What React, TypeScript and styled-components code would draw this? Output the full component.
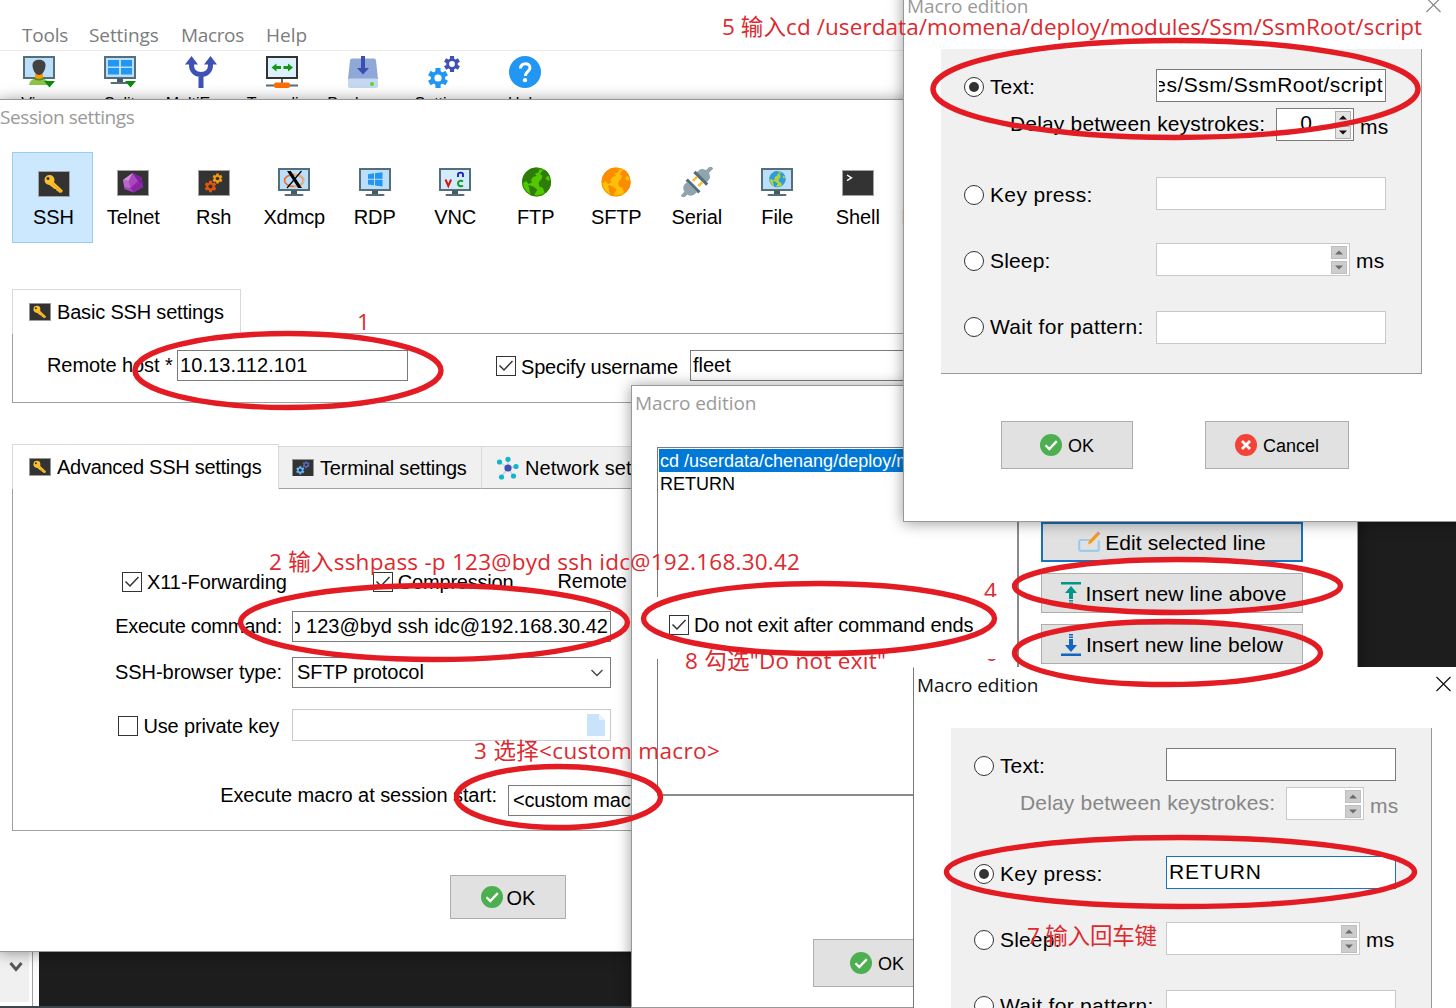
import React from "react";
import styled, { createGlobalStyle, css } from "styled-components";

const Global = createGlobalStyle`
  * { box-sizing: border-box; }
  body { margin: 0; background: #fff; overflow: hidden; }
`;

const ui = `"Open Sans", "Noto Sans", "Noto Sans CJK SC", sans-serif`;
const arial = `"Liberation Sans", Arial, sans-serif`;
const red = "#e31b23";

/* ---------- desktop ---------- */

const Desktop = styled.main`
  position: relative;
  width: 1456px;
  height: 1008px;
  overflow: hidden;
  background: #fff;
  color: #000;
  font-family: ${arial};
  font-size: 20px;
  line-height: 24px;
  white-space: nowrap;
`;

const Terminal = styled.div`
  position: absolute;
  left: 0;
  top: 100px;
  width: 1456px;
  height: 908px;
  display: flex;
  background: #1d1d1d;
  border-bottom: 2px solid #3b474b;
`;

const SideRail = styled.div`
  display: flex;
  align-items: flex-end;
  width: 33px;
  padding: 0 3px 4px 0;
  background: #fff;
  border-right: 1px solid #a0a0a0;
`;

const ScrollTrack = styled.div`
  width: 29px;
  height: 56px;
  padding: 8px 0 0 9px;
  background: #f0f0f0;
`;

const RailGap = styled.div`
  width: 6px;
  background: #fcfcfc;
`;

const MainApp = styled.header`
  height: 100px;
  overflow: hidden;
  background: #fff;
`;

const MenuBar = styled.nav`
  display: flex;
  height: 51px;
  padding: 23px 0 0 22px;
  border-bottom: 1px solid #ebebeb;
  color: #7c7c7c;
  font: 19px/24px ${ui};
`;

const MenuItem = styled.span<{ $w: number; $ls: number }>`
  width: ${(p) => p.$w}px;
  letter-spacing: ${(p) => p.$ls}px;
`;

const ToolBar = styled.div`
  display: flex;
  padding-top: 5px;
  margin-left: -2px;
`;

const ToolItem = styled.div`
  display: flex;
  flex-direction: column;
  align-items: center;
  gap: 6px;
  width: 81px;
  font-size: 16px;
  line-height: 20px;
  svg { flex: none; }
`;

/* ---------- windows ---------- */

const Window = styled.section<{ $x: number; $y: number; $w: number; $h: number; $flat?: boolean }>`
  position: absolute;
  left: ${(p) => p.$x}px;
  top: ${(p) => p.$y}px;
  width: ${(p) => p.$w}px;
  height: ${(p) => p.$h}px;
  background: #fff;
  border: 1px solid #989898;
  ${(p) =>
    p.$flat
      ? css`border-color: #fff #fff #fff #777;`
      : css`box-shadow: 0 1px 14px rgba(0, 0, 0, 0.4);`}
`;

const TitleBar = styled.div<{ $active?: boolean; $flush?: boolean }>`
  display: flex;
  flex: none;
  align-items: center;
  height: 34px;
  padding-left: ${(p) => (p.$flush ? 0 : 3)}px;
  color: ${(p) => (p.$active ? "#111" : "#9a9a9a")};
  font: 19px/24px ${ui};
  letter-spacing: ${(p) => (p.$flush ? -0.42 : -0.1)}px;
`;

const Text = styled.span<{ $ls?: number; $dy?: number; $dim?: boolean; $ml?: number; $w?: number }>`
  ${(p) => p.$w && css`width: ${p.$w}px;`}
  letter-spacing: ${(p) => p.$ls ?? 0}px;
  margin-top: ${(p) => (p.$dy ?? 0) * 2}px;
  margin-left: ${(p) => p.$ml ?? 0}px;
  ${(p) => p.$dim && css`color: #868686;`}
`;

const Row = styled.div<{ $h: number; $mt?: number; $pl?: number }>`
  display: flex;
  align-items: center;
  height: ${(p) => p.$h}px;
  margin-top: ${(p) => p.$mt ?? 0}px;
  padding-left: ${(p) => p.$pl ?? 0}px;
`;

const Field = styled.div<{ $w: number; $tone?: string; $end?: boolean; $pad?: number; $mr?: number }>`
  display: flex;
  flex: none;
  align-items: center;
  align-self: stretch;
  justify-content: ${(p) => (p.$end ? "flex-end" : "flex-start")};
  width: ${(p) => p.$w}px;
  margin-right: ${(p) => p.$mr ?? 0}px;
  padding: 0 2px 0 ${(p) => p.$pad ?? 2}px;
  overflow: hidden;
  background: #fff;
  border: 1px solid ${(p) => p.$tone ?? "#7a7a7a"};
`;

const Clip = styled.div`
  display: flex;
  flex: 1;
  min-width: 0;
  justify-content: flex-end;
  overflow: hidden;
`;

const Push = styled.i`
  flex: 1;
`;

const Box = styled.span<{ $ml?: number }>`
  display: flex;
  flex: none;
  align-items: center;
  justify-content: center;
  width: 20px;
  height: 20px;
  margin-left: ${(p) => p.$ml ?? 0}px;
  margin-right: 5px;
  background: #fff;
  border: 1px solid #333;
`;

const Button = styled.div<{ $w: number; $h: number; $focus?: boolean; $size?: number; $gap?: number }>`
  display: flex;
  flex: none;
  align-items: center;
  justify-content: center;
  gap: ${(p) => p.$gap ?? 6}px;
  width: ${(p) => p.$w}px;
  height: ${(p) => p.$h}px;
  background: #e1e1e1;
  border: ${(p) => (p.$focus ? "2px solid #1673bd" : "1px solid #adadad")};
  font-size: ${(p) => p.$size ?? 20}px;
`;

/* ---------- session settings ---------- */

const ProtocolBar = styled.div`
  display: flex;
  height: 91px;
  margin: 18px 0 0 12px;
`;

const Protocol = styled.div<{ $on?: boolean; $last?: boolean }>`
  display: flex;
  flex: none;
  flex-direction: column;
  align-items: center;
  gap: 8px;
  width: ${(p) => (p.$on ? 81 : 80.5)}px;
  padding: ${(p) => (p.$on ? 14 : 15)}px ${(p) => (p.$last ? 1 : 0)}px 0 ${(p) => (p.$on ? 2 : 0)}px;
  ${(p) => p.$on && css`background: #cce8ff; border: 1px solid #99cdf2;`}
  letter-spacing: -0.1px;
`;

const Tabs = styled.div<{ $h: number; $mt: number }>`
  display: flex;
  align-items: flex-end;
  height: ${(p) => p.$h}px;
  margin: ${(p) => p.$mt}px 0 0 12px;
`;

const Tab = styled.div<{ $w: number; $h: number; $on?: boolean }>`
  display: flex;
  flex: none;
  align-items: center;
  gap: 6px;
  width: ${(p) => p.$w}px;
  height: ${(p) => p.$h}px;
  padding-left: ${(p) => (p.$on ? 16 : 13)}px;
  border: 1px solid #d9d9d9;
  border-bottom: 0;
  ${(p) =>
    !p.$on &&
    css`
      background: #f0f0f0;
      border-left: 0;
      border-bottom: 1px solid #a0a0a0;
    `}
`;

const TabRule = styled.div`
  flex: 1;
  border-bottom: 1px solid #a0a0a0;
`;

const TabPanel = styled.div<{ $h: number }>`
  height: ${(p) => p.$h}px;
  margin-left: 12px;
  overflow: hidden;
  border: solid #a0a0a0;
  border-width: 0 0 1px 1px;
`;

const Labels = styled.div<{ $w: number; $gap?: number }>`
  display: flex;
  flex: none;
  justify-content: flex-end;
  align-items: center;
  width: ${(p) => p.$w}px;
  padding-right: ${(p) => p.$gap ?? 10}px;
`;

/* ---------- macro list ---------- */

const ListLayout = styled.div`
  display: flex;
  align-items: flex-start;
  margin: 27px 0 0 25px;
`;

const ListBox = styled.div`
  width: 362px;
  height: 349px;
  padding: 1px;
  border: 1px solid #7a7a7a;
  border-right: 2px solid #8a8a8e;
  border-bottom: 2px solid #8a8a8e;
`;

const ListItem = styled.div<{ $on?: boolean }>`
  height: 23px;
  padding-left: 1px;
  overflow: hidden;
  font-size: 18px;
  line-height: 24px;
  ${(p) => p.$on && css`background: #0078d7; color: #fff;`}
`;

const ButtonColumn = styled.div`
  display: flex;
  flex-direction: column;
  gap: 11px;
  margin: 75px 0 0 22px;
`;

const Patch = styled.div`
  position: absolute;
  left: 640px;
  top: 597px;
  width: 360px;
  height: 62px;
  display: flex;
  align-items: center;
  padding: 0 0 6px 29px;
  background: #fff;
`;

/* ---------- macro edition ---------- */

const Panel = styled.div`
  width: 481px;
  height: 325px;
  margin: 26px 0 0 37px;
  padding-top: 20px;
  background: #f0f0f0;
  border: solid #999;
  border-width: 0 1px 1px 0;
  font-size: 21px;
`;

const Choice = styled.label<{ $up?: boolean }>`
  display: flex;
  flex: none;
  align-items: center;
  gap: 6px;
  width: 192px;
  margin-top: ${(p) => (p.$up ? -1 : 3)}px;
`;

const Radio = styled.i<{ $on?: boolean }>`
  display: flex;
  flex: none;
  width: 20px;
  height: 20px;
  padding: 4px;
  background: #fff;
  border: 1px solid #333;
  border-radius: 50%;
  &::after {
    content: "";
    flex: 1;
    border-radius: 50%;
    background: ${(p) => (p.$on ? "#333" : "transparent")};
  }
`;

const Spin = styled.div`
  display: flex;
  flex-direction: column;
  gap: 2px;
`;

const SpinKey = styled.i<{ $off?: boolean }>`
  display: flex;
  align-items: center;
  justify-content: center;
  width: 16px;
  height: 13px;
  background: ${(p) => (p.$off ? "#cdcdcd" : "#e3e3e3")};
  border: 1px solid ${(p) => (p.$off ? "#bfbfbf" : "#b0b0b0")};
`;

const Digit = styled.span`
  flex: 1;
  margin-top: -3px;
  padding-right: 2px;
  text-align: center;
`;

/* ---------- annotations ---------- */

const Note = styled.span<{ $x: number; $base: number; $ls?: number }>`
  position: absolute;
  left: ${(p) => p.$x}px;
  top: ${(p) => p.$base - 23}px;
  color: #dc2a2f;
  font-family: ${ui};
  font-size: 22.5px;
  line-height: 30px;
  letter-spacing: ${(p) => p.$ls ?? 0}px;
`;

const Rings = styled.svg`
  position: absolute;
  left: 0;
  top: 0;
`;

/* ---------- icons ---------- */

const GearShape = ({ cx, cy, r, color, hole }: { cx: number; cy: number; r: number; color: string; hole: string }) => (
  <g transform={`translate(${cx} ${cy})`}>
    {[0, 60, 120].map((a) => (
      <rect key={a} x={-r * 0.26} y={-r} width={r * 0.52} height={r * 2} fill={color} transform={`rotate(${a})`} />
    ))}
    <circle r={r * 0.72} fill={color} />
    <circle r={r * 0.36} fill={hole} />
  </g>
);

const KeyShape = () => (
  <g>
    <path d="M13 8.500L24.800 19.500l-.8 2-2.800.2-1-1.500-1.600-.2-.3-1.800-1.700-.2L9.500 12.500z" fill="#fbc02d" />
    <circle cx="11.500" cy="9" r="5" fill="#fbc02d" />
    <circle cx="10" cy="7.600" r="1.500" fill="#333" />
    <path d="M14 12.500l9 8" stroke="#f59b12" strokeWidth="1" />
  </g>
);

const Screen = ({ w = 32, children }: { w?: number; children?: React.ReactNode }) => (
  <svg width={w} height={(w * 26) / 32} viewBox="0 0 32 26">
    <rect x=".5" y=".5" width="31" height="25" fill="#333" stroke="#a3a3a3" />
    {children}
  </svg>
);

const Monitor = ({ light, children }: { light?: boolean; children?: React.ReactNode }) => (
  <g>
    <rect x="1" y="1" width="30" height="21" fill={light ? "#d3ecfc" : "#bbdefb"} stroke="#546e7a" strokeWidth="2" />
    <rect x="13" y="22.500" width="6" height="4" fill="#455a64" />
    <rect x="6.500" y="26" width="19" height="2" rx="1" fill="#546e7a" />
    {children}
  </g>
);

const Globe = ({ x = 0, y = 0, s = 1, sea, land }: { x?: number; y?: number; s?: number; sea: string; land: string }) => (
  <g transform={`translate(${x} ${y}) scale(${s})`}>
    <circle cx="15" cy="15" r="14.500" fill={sea} />
    <path
      d="M2.500 8C5 4 9 1 14 .8l4 1.700-1 3-3.500 1 1.500 2.500-3.500 1-2 3 1 2.500-3.500 1.500L4.500 14 2 16 .8 13zM7 18l5 1.500 4 3.500-2 2.500-1.500 3.500-3-1-1.500-4.500zM20 5l3-2.500c3 2 4.500 4 5.500 7L26 9l-2 2.500 2 2 3.500 0c.4 4-1 8-3.500 10.500l-3 1.500-1.500-4.500-3.500-1.500-1-4 3-3.500 1-3.500-2.500-1z"
      fill={land}
    />
    <circle cx="15" cy="15" r="14" fill="none" stroke={land} strokeWidth="1" />
  </g>
);

const OkIcon = () => (
  <svg width="22" height="22" viewBox="0 0 22 22">
    <circle cx="11" cy="11" r="11" fill="#4caf50" />
    <path d="M5.500 11.200l3.800 3.900 7.500-8" fill="none" stroke="#fff" strokeWidth="2.300" />
  </svg>
);

const CancelIcon = () => (
  <svg width="22" height="22" viewBox="0 0 22 22">
    <circle cx="11" cy="11" r="11" fill="#f44336" />
    <path d="M7 7l8 8M15 7l-8 8" stroke="#fff" strokeWidth="2.800" />
  </svg>
);

const Check = () => (
  <svg width="16" height="14" viewBox="0 0 16 14">
    <path d="M1.500 6.500l4.500 4.500L14.500 2" fill="none" stroke="#333" strokeWidth="1.500" />
  </svg>
);

const Cross = ({ color }: { color: string }) => (
  <svg width="26" height="16" viewBox="0 0 26 16">
    <path d="M5.500 1l14 14M19.500 1l-14 14" stroke={color} strokeWidth="1.200" />
  </svg>
);

const Chevron = () => (
  <svg width="14" height="10" viewBox="0 0 14 10">
    <path d="M1.500 2L7 7.500 12.500 2" fill="none" stroke="#444" strokeWidth="1.300" />
  </svg>
);

const Arrow = ({ up, color }: { up?: boolean; color: string }) => (
  <svg width="8" height="5" viewBox="0 0 8 5">
    <path d={up ? "M0 4.500L4 .5l4 4z" : "M0 .5h8l-4 4z"} fill={color} />
  </svg>
);

const Tool = ({ children }: { children: React.ReactNode }) => (
  <svg width="32" height="32" viewBox="0 0 32 32">
    {children}
  </svg>
);

const DropMark = () => <path d="M21 25h11l-5.500 6.500z" fill="#0a8a0a" />;

const toolbar: [string, React.ReactNode][] = [
  [
    "View",
    <Tool>
      <rect x="1" y="1" width="30" height="21" fill="#bbdefb" stroke="#546e7a" strokeWidth="2" />
      <path d="M6 29c1-5 4-7 10-7s9 2 10 7z" fill="#8bc34a" />
      <path d="M12 18h8v4l-4 2.500-4-2.500z" fill="#ff9800" />
      <path d="M11 21.500c2 3 8 3 10 0" fill="none" stroke="#4a8a2a" strokeWidth="1.500" />
      <path d="M9.500 9c0-7 13-7 13 0 0 5-3 10-6.500 10s-6.500-5-6.500-10z" fill="#424242" />
      <DropMark />
    </Tool>,
  ],
  [
    "Split",
    <Tool>
      <Monitor />
      <g fill="#2196f3">
        <rect x="4" y="4" width="11" height="6.500" />
        <rect x="17" y="4" width="11" height="6.500" />
        <rect x="4" y="12" width="11" height="6.500" />
        <rect x="17" y="12" width="11" height="6.500" />
      </g>
      <DropMark />
    </Tool>,
  ],
  [
    "MultiExec",
    <Tool>
      <path d="M6.500 6v3c0 6 4 9.500 9.500 9.500S25.500 15 25.500 9V6M16 18v14" fill="none" stroke="#3f51b5" strokeWidth="5" />
      <path d="M0 8.500L6.500 0 13 8.500zM19 8.500L25.500 0 32 8.500z" fill="#3f51b5" />
    </Tool>,
  ],
  [
    "Tunneling",
    <Tool>
      <rect x="1" y="1" width="30" height="21" fill="#ddf1fd" stroke="#333" strokeWidth="2" />
      <path d="M5.500 11.500l5-4v2.500h4.500v3h-4.500v2.500zM27 11.500l-5-4v2.500h-4.500v3h4.500v2.500z" fill="#109a10" />
      <path d="M16 23v4M0 29.500h32" stroke="#546e7a" strokeWidth="2" />
      <rect x="8" y="26.500" width="16" height="5.500" rx="2" fill="#ff6d00" />
    </Tool>,
  ],
  [
    "Packages",
    <Tool>
      <path d="M5 2.500h22a2 2 0 0 1 2 2L31 23H1L3 4.500a2 2 0 0 1 2-2z" fill="#90a8d8" />
      <rect x="1" y="22.500" width="30" height="9.500" rx="2" fill="#c5d8f0" />
      <circle cx="25" cy="28" r="2" fill="#62d03a" />
      <path d="M14 0h4v12h4l-6 6.500-6-6.500h4z" fill="#3a4eb0" />
    </Tool>,
  ],
  [
    "Settings",
    <Tool>
      <GearShape cx={10} cy={22} r={10} color="#2196f3" hole="#fff" />
      <GearShape cx={24} cy={8} r={8} color="#3f51b5" hole="#fff" />
    </Tool>,
  ],
  [
    "Help",
    <Tool>
      <circle cx="16" cy="16" r="16" fill="#2196f3" />
      <path d="M11.500 12.500c0-6.500 9.500-6.200 9.500-.8 0 3.500-4.600 4-4.600 8.300" fill="none" stroke="#fff" strokeWidth="3" />
      <circle cx="16" cy="24.200" r="2.100" fill="#fff" />
    </Tool>,
  ],
];

const Proto = ({ children }: { children: React.ReactNode }) => (
  <svg width="32" height="30" viewBox="0 0 32 30">
    {children}
  </svg>
);

const DarkTile = ({ y = 3, children }: { y?: number; children?: React.ReactNode }) => (
  <g transform={`translate(0 ${y})`}>
    <rect x=".5" y=".5" width="31" height="25" fill="#333" stroke="#a3a3a3" />
    {children}
  </g>
);

const protocols: [string, React.ReactNode][] = [
  ["SSH", <Proto><DarkTile y={4}><KeyShape /></DarkTile></Proto>],
  [
    "Telnet",
    <Proto>
      <DarkTile>
        <path d="M15.500 3l9 4.500 1.500 9.500-9.500 5.500-9-3.500L6 10z" fill="#ab47bc" />
        <path d="M15.500 3L6 10l5.500 1z" fill="#ce93d8" />
        <path d="M6 10l5.500 1 2 7-6-1z" fill="#ba68c8" />
        <path d="M15.500 3l9 4.500L26 17l-5-6z" fill="#7b1fa2" />
        <path d="M21 11l5 6-9.500 5.500-3-4.500z" fill="#8e24aa" />
      </DarkTile>
    </Proto>,
  ],
  [
    "Rsh",
    <Proto>
      <DarkTile>
        <GearShape cx={12.5} cy={16.5} r={5.8} color="#e0560f" hole="#333" />
        <GearShape cx={19.5} cy={8.5} r={5} color="#f59b12" hole="#333" />
      </DarkTile>
    </Proto>,
  ],
  [
    "Xdmcp",
    <Proto>
      <g transform="translate(0 1)">
        <Monitor />
        <ellipse cx="16" cy="12.500" rx="9.500" ry="6" fill="none" stroke="#e8702a" strokeWidth="1.600" />
        <path d="M16 6.500c13 0 13 12 0 12" fill="none" stroke="#f0b070" strokeWidth="1.600" />
        <path d="M9 3h3.800L24 20h-3.800z" fill="#000" />
        <path d="M23.500 3L9 20" stroke="#000" strokeWidth="1.200" />
      </g>
    </Proto>,
  ],
  [
    "RDP",
    <Proto>
      <g transform="translate(0 1)">
        <Monitor />
        <path d="M9 6.200l6-.9v5.500H9zM16 5.200l7.500-1v6.600H16zM9 11.800h6v5.500l-6-.9zM16 11.800h7.500v6.600l-7.500-1z" fill="#2196f3" />
      </g>
    </Proto>,
  ],
  [
    "VNC",
    <Proto>
      <g transform="translate(0 1)">
        <Monitor light />
        <path d="M6.500 11.500l2.800 6.500 2.800-6.500" fill="none" stroke="#d31818" strokeWidth="2" />
        <path d="M19 9V6.500c0-2.500 5-2.500 5 0V9" fill="none" stroke="#1818c8" strokeWidth="1.800" />
        <path d="M24 13.500c-2-1.600-5-.6-5 2s3 3.500 5 2" fill="none" stroke="#109a20" strokeWidth="2" />
      </g>
    </Proto>,
  ],
  ["FTP", <Proto><Globe x={1.5} sea="#52c800" land="#2e7d0a" /></Proto>],
  ["SFTP", <Proto><Globe x={1} sea="#ffc107" land="#fb8c00" /></Proto>],
  [
    "Serial",
    <Proto>
      <g transform="translate(16 15) rotate(45)">
        <rect x="-2" y="-21" width="4" height="7" fill="#90a4ae" />
        <path d="M-7-6v-3c0-8 14-8 14 0v3z" fill="#90a4ae" />
        <rect x="-9" y="-7" width="18" height="3.200" fill="#546e7a" />
        <rect x="-5" y="-4" width="2.500" height="6" fill="#fbc02d" />
        <rect x="2.500" y="-4" width="2.500" height="6" fill="#fbc02d" />
        <rect x="-9" y="4" width="18" height="3.200" fill="#546e7a" />
        <path d="M-7 7v3c0 8 14 8 14 0v-3z" fill="#90a4ae" />
        <rect x="-2" y="14" width="4" height="7" fill="#90a4ae" />
      </g>
    </Proto>,
  ],
  [
    "File",
    <Proto>
      <g transform="translate(0 1)">
        <Monitor />
        <Globe x={8} y={2.8} s={0.56} sea="#b5d334" land="#2e9be0" />
      </g>
    </Proto>,
  ],
  [
    "Shell",
    <Proto>
      <DarkTile>
        <path d="M5 5l4.500 2.800L5 10.600" fill="none" stroke="#fff" strokeWidth="1.400" />
      </DarkTile>
    </Proto>,
  ],
  ["Browser", <Proto><g /></Proto>],
];

/* ---------- dialogs ---------- */

const Spinner = ({ off }: { off?: boolean }) => (
  <Spin>
    <SpinKey $off={off}><Arrow up color={off ? "#6d6d6d" : "#111"} /></SpinKey>
    <SpinKey $off={off}><Arrow color={off ? "#6d6d6d" : "#111"} /></SpinKey>
  </Spin>
);

const MacroDialog = ({ x, y, h, front, mode, text, keyName }: {
  x: number; y: number; h: number; front?: boolean; mode: "text" | "key"; text?: string; keyName?: string;
}) => {
  const isText = mode === "text";
  return (
    <Window $x={x} $y={y} $w={600} $h={h} $flat={front}>
      <Row $h={34}>
        <TitleBar $active={front}>Macro edition</TitleBar>
        <Text $ml={393}><Cross color={front ? "#111" : "#888"} /></Text>
      </Row>
      <Panel>
        <Row $h={33} $pl={23}>
          <Choice><Radio $on={isText} /><Text $ls={0.1}>Text:</Text></Choice>
          <Field $w={230} $end><Clip><Text $dy={-1} $ls={0.5}>{text}</Text></Clip></Field>
        </Row>
        <Row $h={33} $mt={6} $pl={69}>
          <Text $ls={0.17} $dim={!isText} $dy={-0.5}>Delay between keystrokes:</Text>
          <Push />
          <Field $w={78} $tone={isText ? "#7a7a7a" : "#c9c9c9"}>
            <Digit>{isText ? "0" : ""}</Digit>
            <Spinner off={!isText} />
          </Field>
          <Text $dim={!isText} $dy={2} $ml={6} $w={61} $ls={0.2}>ms</Text>
        </Row>
        <Row $h={33} $mt={36} $pl={23}>
          <Choice><Radio $on={!isText} /><Text $ls={0.35}>Key press:</Text></Choice>
          <Field $w={230} $tone={isText ? "#c9c9c9" : "#1673bd"}><Text $dy={-1} $ls={0.9}>{keyName}</Text></Field>
        </Row>
        <Row $h={33} $mt={33} $pl={23}>
          <Choice><Radio /><Text $ls={0.15}>Sleep:</Text></Choice>
          <Field $w={194} $tone="#c9c9c9"><Push /><Spinner off /></Field>
          <Text $dy={1.5} $ml={6} $ls={0.2}>ms</Text>
        </Row>
        <Row $h={33} $mt={35} $pl={23}>
          <Choice $up><Radio /><Text $ls={0.3}>Wait for pattern:</Text></Choice>
          <Field $w={230} $tone="#c9c9c9" />
        </Row>
      </Panel>
      <Row $h={48} $mt={47} $pl={97}>
        <Button $w={132} $h={48} $size={18}><OkIcon /><Text $dy={0.5}>OK</Text></Button>
        <Text $ml={72} />
        <Button $w={144} $h={48} $size={18}><CancelIcon /><Text $dy={0.5}>Cancel</Text></Button>
      </Row>
    </Window>
  );
};

const CheckBox = ({ on, ml, label, ls, dy }: { on?: boolean; ml?: number; label: string; ls?: number; dy?: number }) => (
  <>
    <Box $ml={ml}>{on && <Check />}</Box>
    <Text $ls={ls} $dy={dy}>{label}</Text>
  </>
);

const SessionWindow = () => (
  <Window $x={-1} $y={99} $w={1000} $h={853}>
    <TitleBar $flush>Session settings</TitleBar>
    <ProtocolBar>
      {protocols.map(([name, icon], i) => (
        <Protocol key={name} $on={i === 0} $last={i === protocols.length - 1}>{icon}{name}</Protocol>
      ))}
    </ProtocolBar>
    <Tabs $h={45} $mt={46}>
      <Tab $w={229} $h={45} $on>
        <Screen w={22}><KeyShape /></Screen>
        <Text $ls={-0.18}>Basic SSH settings</Text>
      </Tab>
      <TabRule />
    </Tabs>
    <TabPanel $h={69}>
      <Row $h={31} $mt={16} $pl={34}>
        <Text $w={130} $dy={-0.5} $ls={-0.08}>Remote host *</Text>
        <Field $w={231}><Text $dy={-1} $ls={0.08}>10.13.112.101</Text></Field>
        <CheckBox on ml={88} label="Specify username" ls={-0.2} dy={1} />
        <Push />
        <Field $w={300} $mr={8}><Text $dy={-1}>fleet</Text></Field>
      </Row>
    </TabPanel>
    <Tabs $h={45} $mt={41}>
      <Tab $w={267} $h={45} $on>
        <Screen w={22}><KeyShape /></Screen>
        <Text $ls={-0.27}>Advanced SSH settings</Text>
      </Tab>
      <Tab $w={203} $h={43}>
        <Screen w={22}>
          <GearShape cx={12} cy={16.5} r={6} color="#64b5f6" hole="#333" />
          <GearShape cx={20.5} cy={8.5} r={5} color="#5c6bc0" hole="#333" />
        </Screen>
        <Text $ls={-0.2}>Terminal settings</Text>
      </Tab>
      <Tab $w={220} $h={43}>
        <svg width="24" height="24" viewBox="-1 0 24 24">
          <path d="M12 12L3.500 6M12 12V3.500M12 12l8.500-1.500M12 12l5.500 8.500M12 12l-6.500 8.500" stroke="#c5cfe8" strokeWidth="1.300" />
          <g fill="#12b5cb">
            <circle cx="3.500" cy="6" r="2.600" />
            <circle cx="12" cy="3.300" r="2.600" />
            <circle cx="20" cy="10.500" r="2.600" />
            <circle cx="17.500" cy="20" r="2.600" />
            <circle cx="5.500" cy="21" r="2.600" />
          </g>
          <circle cx="12" cy="12" r="3.600" fill="#3f51b5" />
        </svg>
        <Text $ls={0.1}>Network settings</Text>
      </Tab>
      <TabRule />
    </Tabs>
    <TabPanel $h={342}>
      <Row $h={24} $mt={81} $pl={109}>
        <CheckBox on label="X11-Forwarding" ls={-0.07} />
        <CheckBox on ml={86} label="Compression" ls={-0.2} />
        <Text $ml={44} $dy={-1} $ls={-0.1}>Remote environment:</Text>
      </Row>
      <Row $h={31} $mt={17}>
        <Labels $w={279}><Text $ls={-0.27} $dy={-0.5}>Execute command:</Text></Labels>
        <Field $w={319} $end><Clip><Text $ls={0} $dy={-0.5}>p 123@byd ssh idc@192.168.30.42</Text></Clip></Field>
      </Row>
      <Row $h={31} $mt={15}>
        <Labels $w={279}><Text $dy={-0.5} $ls={-0.05}>SSH-browser type:</Text></Labels>
        <Field $w={319} $pad={4}><Text $dy={-0.5} $ls={-0.05}>SFTP protocol</Text><Push /><Chevron /><Text $ml={4} /></Field>
      </Row>
      <Row $h={32} $mt={21}>
        <Labels $w={279} $gap={13}>
          <Row $h={22} $mt={2}><CheckBox label="Use private key" ls={-0.15} /></Row>
        </Labels>
        <Field $w={319} $tone="#c9c9c9">
          <Push />
          <svg width="18" height="22" viewBox="0 0 18 22">
            <path d="M0 0h12l6 6v16H0z" fill="#c9e3fa" />
            <path d="M12 0v6h6z" fill="#e8f4fd" />
          </svg>
          <Text $ml={3} />
        </Field>
      </Row>
      <Row $h={31} $mt={44}>
        <Labels $w={495} $gap={11}><Text $dy={-6} $ls={-0.07}>Execute macro at session start:</Text></Labels>
        <Field $w={300} $pad={4}><Text $dy={-0.5} $ls={-0.17}>&lt;custom macro&gt;</Text></Field>
      </Row>
    </TabPanel>
    <Row $h={44} $mt={44} $pl={450}>
      <Button $w={116} $h={44} $gap={4}><OkIcon /><Text $dy={0.5}>OK</Text></Button>
    </Row>
  </Window>
);

const MacroListWindow = () => (
  <Window $x={631} $y={385} $w={727} $h={623}>
    <TitleBar>Macro edition</TitleBar>
    <ListLayout>
      <ListBox>
        <ListItem $on>cd /userdata/chenang/deploy/modules</ListItem>
        <ListItem>RETURN</ListItem>
      </ListBox>
      <ButtonColumn>
        <Button $w={262} $h={40} $size={21} $focus $gap={4}>
          <svg width="23" height="22" viewBox="0 0 23 22">
            <path d="M12 9H3a1.800 1.800 0 0 0-1.800 1.800V18A1.800 1.800 0 0 0 3 19.800h16a1.800 1.800 0 0 0 1.800-1.800V9.500" fill="none" stroke="#9ccbef" strokeWidth="2.200" />
            <path d="M10 13.500l1-3.500 7.500-8 2.500 2-7.500 8z" fill="#f59b12" />
            <path d="M18.500 2L20 .5 22.500 2.500 21 4z" fill="#d88a90" />
          </svg>
          <Text $dy={0.5} $ls={0.1}>Edit selected line</Text>
        </Button>
        <Button $w={262} $h={40} $size={21} $gap={5}>
          <Text $ml={2} />
          <svg width="20" height="23" viewBox="0 0 20 23">
            <path d="M0 0h20v2.400H0zM10 4l6 7h-4v6H8v-6H4zM8 18h4v1.500H8zM8 20.500h4V22H8z" fill="#009688" />
          </svg>
          <Text $dy={0.5} $ls={0.12}>Insert new line above</Text>
          <Text $ml={-1} />
        </Button>
        <Button $w={262} $h={40} $size={21} $gap={5}>
          <svg width="20" height="23" viewBox="0 0 20 23">
            <path d="M0 20.600h20V23H0zM10 19l6-7h-4V6H8v6H4zM8 3.500h4V5H8zM8 1h4v1.500H8z" fill="#1565c0" />
          </svg>
          <Text $dy={0.5} $ls={0.05}>Insert new line below</Text>
        </Button>
      </ButtonColumn>
    </ListLayout>
    <Row $h={48} $mt={143} $pl={181}>
      <Button $w={128} $h={48} $size={18}><OkIcon /><Text $dy={0.5}>OK</Text></Button>
    </Row>
  </Window>
);

const rings = [
  [288, 370.5, 153, 37],
  [434, 622.5, 193.5, 37],
  [558.5, 797, 102, 30.5],
  [819, 618.5, 175.5, 35],
  [1175.5, 89, 242.5, 48.5],
  [1177.5, 586, 163, 26.5],
  [1167.5, 653, 153, 31.5],
  [1180.5, 872, 234, 34.5],
];

export default function App() {
  return (
    <Desktop>
      <Global />
      <Terminal>
        <SideRail>
          <ScrollTrack>
            <svg width="14" height="12" viewBox="0 0 14 12">
              <path d="M1.500 2L7 8.500 12.500 2" fill="none" stroke="#555" strokeWidth="3" />
            </svg>
          </ScrollTrack>
        </SideRail>
        <RailGap />
      </Terminal>
      <MainApp>
        <MenuBar>
          <MenuItem $w={67} $ls={-0.2}>Tools</MenuItem>
          <MenuItem $w={92} $ls={-0.1}>Settings</MenuItem>
          <MenuItem $w={85} $ls={-0.35}>Macros</MenuItem>
          <MenuItem $w={60} $ls={0}>Help</MenuItem>
        </MenuBar>
        <ToolBar>
          {toolbar.map(([name, icon]) => (
            <ToolItem key={name}>{icon}<span>{name}</span></ToolItem>
          ))}
        </ToolBar>
      </MainApp>
      <SessionWindow />
      <MacroListWindow />
      <Note $x={984} $base={599}>4</Note>
      <Note $x={985} $base={661}>6</Note>
      <Patch><CheckBox on label="Do not exit after command ends" ls={-0.14} /></Patch>
      <MacroDialog x={903} y={-12} h={534} mode="text" text="cd /userdata/momena/deploy/modules/Ssm/SsmRoot/script" />
      <MacroDialog x={913} y={667} h={534} front mode="key" keyName="RETURN" />
      <Note $x={722} $base={35} $ls={0.08}>5 输入cd /userdata/momena/deploy/modules/Ssm/SsmRoot/script</Note>
      <Note $x={357} $base={330}>1</Note>
      <Note $x={269} $base={570} $ls={0.24}>2 输入sshpass -p 123@byd ssh idc@192.168.30.42</Note>
      <Note $x={474} $base={759} $ls={0.35}>3 选择&lt;custom macro&gt;</Note>
      <Note $x={685} $base={669} $ls={0.27}>8 勾选"Do not exit"</Note>
      <Note $x={1027} $base={944} $ls={-0.2}>7 输入回车键</Note>
      <Rings width="1456" height="1008" viewBox="0 0 1456 1008">
        {rings.map(([cx, cy, rx, ry]) => (
          <ellipse key={cy} cx={cx} cy={cy} rx={rx} ry={ry} fill="none" stroke={red} strokeWidth="5.400" />
        ))}
      </Rings>
    </Desktop>
  );
}
